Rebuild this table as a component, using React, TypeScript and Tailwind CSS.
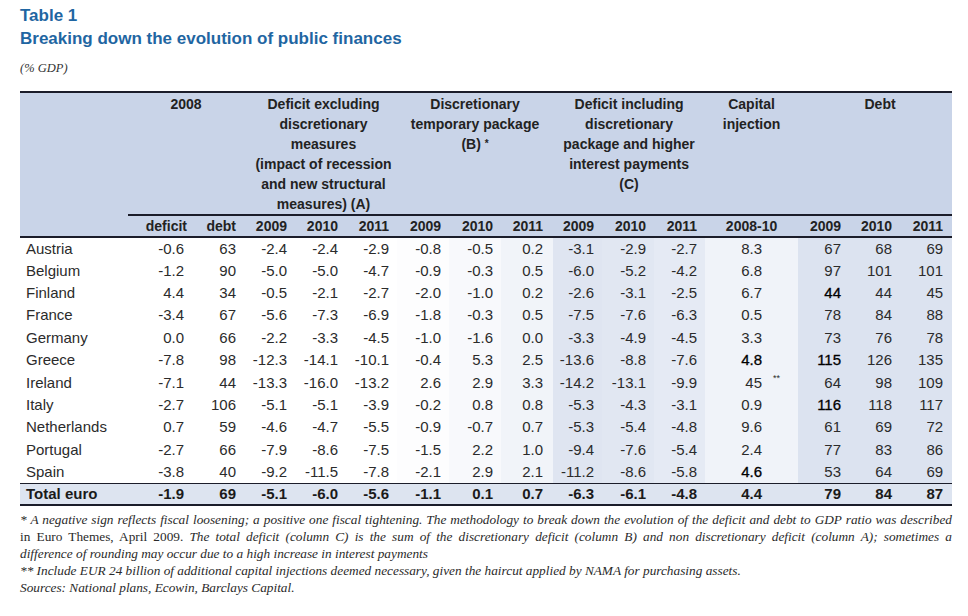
import React from "react";

type Row = {
  name: string;
  v: string[];
  dark?: number[];
};

const ROWS: Row[] = [
  { name: "Austria", v: ["-0.6", "63", "-2.4", "-2.4", "-2.9", "-0.8", "-0.5", "0.2", "-3.1", "-2.9", "-2.7", "8.3", "67", "68", "69"] },
  { name: "Belgium", v: ["-1.2", "90", "-5.0", "-5.0", "-4.7", "-0.9", "-0.3", "0.5", "-6.0", "-5.2", "-4.2", "6.8", "97", "101", "101"] },
  { name: "Finland", v: ["4.4", "34", "-0.5", "-2.1", "-2.7", "-2.0", "-1.0", "0.2", "-2.6", "-3.1", "-2.5", "6.7", "44", "44", "45"], dark: [12] },
  { name: "France", v: ["-3.4", "67", "-5.6", "-7.3", "-6.9", "-1.8", "-0.3", "0.5", "-7.5", "-7.6", "-6.3", "0.5", "78", "84", "88"] },
  { name: "Germany", v: ["0.0", "66", "-2.2", "-3.3", "-4.5", "-1.0", "-1.6", "0.0", "-3.3", "-4.9", "-4.5", "3.3", "73", "76", "78"] },
  { name: "Greece", v: ["-7.8", "98", "-12.3", "-14.1", "-10.1", "-0.4", "5.3", "2.5", "-13.6", "-8.8", "-7.6", "4.8", "115", "126", "135"], dark: [11, 12] },
  { name: "Ireland", v: ["-7.1", "44", "-13.3", "-16.0", "-13.2", "2.6", "2.9", "3.3", "-14.2", "-13.1", "-9.9", "45", "64", "98", "109"] },
  { name: "Italy", v: ["-2.7", "106", "-5.1", "-5.1", "-3.9", "-0.2", "0.8", "0.8", "-5.3", "-4.3", "-3.1", "0.9", "116", "118", "117"], dark: [12] },
  { name: "Netherlands", v: ["0.7", "59", "-4.6", "-4.7", "-5.5", "-0.9", "-0.7", "0.7", "-5.3", "-5.4", "-4.8", "9.6", "61", "69", "72"] },
  { name: "Portugal", v: ["-2.7", "66", "-7.9", "-8.6", "-7.5", "-1.5", "2.2", "1.0", "-9.4", "-7.6", "-5.4", "2.4", "77", "83", "86"] },
  { name: "Spain", v: ["-3.8", "40", "-9.2", "-11.5", "-7.8", "-2.1", "2.9", "2.1", "-11.2", "-8.6", "-5.8", "4.6", "53", "64", "69"], dark: [11] },
];

const TOTAL = ["-1.9", "69", "-5.1", "-6.0", "-5.6", "-1.1", "0.1", "0.7", "-6.3", "-6.1", "-4.8", "4.4", "79", "84", "87"];

// one entry per numeric column: width, body shading, padding
const COLS = [
  { w: "w-[64px]", bg: "bg-white", pad: "pr-[8px]" },
  { w: "w-[52px]", bg: "bg-white", pad: "pr-[8px]" },
  { w: "w-[51px]", bg: "bg-white", pad: "pr-[8px]" },
  { w: "w-[51px]", bg: "bg-white", pad: "pr-[8px]" },
  { w: "w-[51px]", bg: "bg-white", pad: "pr-[8px]" },
  { w: "w-[52px]", bg: "bg-[#fdfdfe]", pad: "pr-[8px]" },
  { w: "w-[52px]", bg: "bg-[#f8f9fc]", pad: "pr-[8px]" },
  { w: "w-[52px]", bg: "bg-[#f1f4f9]", pad: "pr-[10px]" },
  { w: "w-[49px]", bg: "bg-[#dfe5f1]", pad: "pr-[8px]" },
  { w: "w-[52px]", bg: "bg-[#e1e7f2]", pad: "pr-[8px]" },
  { w: "w-[51px]", bg: "bg-[#e5eaf4]", pad: "pr-[8px]" },
  { w: "w-[93px]", bg: "bg-[#f0f3f9]", pad: "pr-[36px]" },
  { w: "w-[51px]", bg: "bg-[#dce3f0]", pad: "pr-[8px]" },
  { w: "w-[51px]", bg: "bg-[#dce3f0]", pad: "pr-[8px]" },
  { w: "w-[52px]", bg: "bg-[#dce3f0]", pad: "pr-[9px]" },
];

const SUB = ["deficit", "debt", "2009", "2010", "2011", "2009", "2010", "2011", "2009", "2010", "2011", "2008-10", "2009", "2010", "2011"];

export default function App() {
  return (
    <div className="w-[968px] h-[616px] bg-white px-[20px] pt-[6px] font-['Liberation_Sans',Arial,sans-serif] text-[#2b2b2b]">
      <h1 className="text-[17px] leading-[20px] font-bold text-[#1f66a2]">Table 1</h1>
      <h2 className="text-[17px] leading-[21px] font-bold text-[#1f66a2] mt-[2px]">
        Breaking down the evolution of public finances
      </h2>
      <p className="mt-[11px] text-[12.5px] leading-[16px] italic font-['Liberation_Serif',serif] text-[#333]">(% GDP)</p>

      <table className="mt-[15px] w-[932px] table-fixed border-collapse border-t-2 border-t-[#1b1d2a]">
        <colgroup>
          <col className="w-[108px]" />
          {COLS.map((c, i) => (
            <col key={i} className={c.w} />
          ))}
        </colgroup>
        <thead className="bg-[#c9d4e8] text-[14px] font-bold leading-[20px] text-[#222]">
          <tr>
            <th rowSpan={2} className="h-[120px]" />
            <th colSpan={2} className="align-top pt-[1px] text-center font-bold border-b-2 border-b-[#1b1d2a]">
              2008
            </th>
            <th colSpan={3} className="align-top pt-[1px] pl-[6px] text-center font-bold border-b-2 border-b-[#1b1d2a]">
              Deficit excluding
              <br />
              discretionary
              <br />
              measures
              <br />
              (impact of recession
              <br />
              and new structural
              <br />
              measures) (A)
            </th>
            <th colSpan={3} className="align-top pt-[1px] text-center font-bold border-b-2 border-b-[#1b1d2a]">
              Discretionary
              <br />
              temporary package
              <br />
              (B) <span className="text-[10px] align-top">*</span>
            </th>
            <th colSpan={3} className="align-top pt-[1px] text-center font-bold border-b-2 border-b-[#1b1d2a]">
              Deficit including
              <br />
              discretionary
              <br />
              package and higher
              <br />
              interest payments
              <br />
              (C)
            </th>
            <th className="align-top pt-[1px] text-center font-bold border-b-2 border-b-[#1b1d2a]">
              Capital
              <br />
              injection
            </th>
            <th colSpan={3} className="align-top pt-[1px] pl-[10px] text-center font-bold border-b-2 border-b-[#1b1d2a]">
              Debt
            </th>
          </tr>
          <tr className="border-b-2 border-b-[#1b1d2a]">
            {SUB.map((s, i) => (
              <th
                key={i}
                className={
                  i === 11
                    ? "h-[22px] text-center font-bold"
                    : i === 0
                    ? "h-[22px] text-right pr-[5px] font-bold"
                    : `h-[22px] text-right font-bold ${COLS[i].pad}`
                }
              >
                {s}
              </th>
            ))}
          </tr>
        </thead>
        <tbody className="text-[15px] leading-[18px]">
          {ROWS.map((r) => (
            <tr key={r.name} className="h-[22.4px]">
              <td className="pl-[6px] bg-white">{r.name}</td>
              {r.v.map((val, i) => (
                <td
                  key={i}
                  className={`relative text-right ${COLS[i].bg} ${COLS[i].pad} ${
                    r.dark && r.dark.includes(i) ? "text-black [-webkit-text-stroke:0.3px_black]" : ""
                  }`}
                >
                  {val}
                  {r.name === "Ireland" && i === 11 && (
                    <span className="absolute left-[68px] top-[2px] text-[9px] leading-[10px]">**</span>
                  )}
                </td>
              ))}
            </tr>
          ))}
          <tr className="h-[22px] bg-[#dde4f0] font-bold text-[#1a1a1a] border-t border-t-[#1b1d2a] border-b-2 border-b-[#1b1d2a]">
            <td className="pl-[6px]">Total euro</td>
            {TOTAL.map((val, i) => (
              <td key={i} className={`text-right ${COLS[i].pad}`}>
                {val}
              </td>
            ))}
          </tr>
        </tbody>
      </table>

      <div className="mt-[5px] w-[932px] font-['Liberation_Serif',serif] italic text-[13.3px] leading-[17px] text-[#2a2a2a]">
        <p className="text-justify [text-align-last:justify]">
          * A negative sign reflects fiscal loosening; a positive one fiscal tightening. The methodology to break down the evolution of
          the deficit and debt to GDP ratio was described
        </p>
        <p className="text-justify [text-align-last:justify]">
          <span className="not-italic">in Euro Themes, April 2009.</span> The total deficit (column C) is the sum of the discretionary
          deficit (column B) and non discretionary deficit (column A); sometimes a
        </p>
        <p>difference of rounding may occur due to a high increase in interest payments</p>
        <p>** Include EUR 24 billion of additional capital injections deemed necessary, given the haircut applied by NAMA for purchasing assets.</p>
        <p>Sources: National plans, Ecowin, Barclays Capital.</p>
      </div>
    </div>
  );
}
